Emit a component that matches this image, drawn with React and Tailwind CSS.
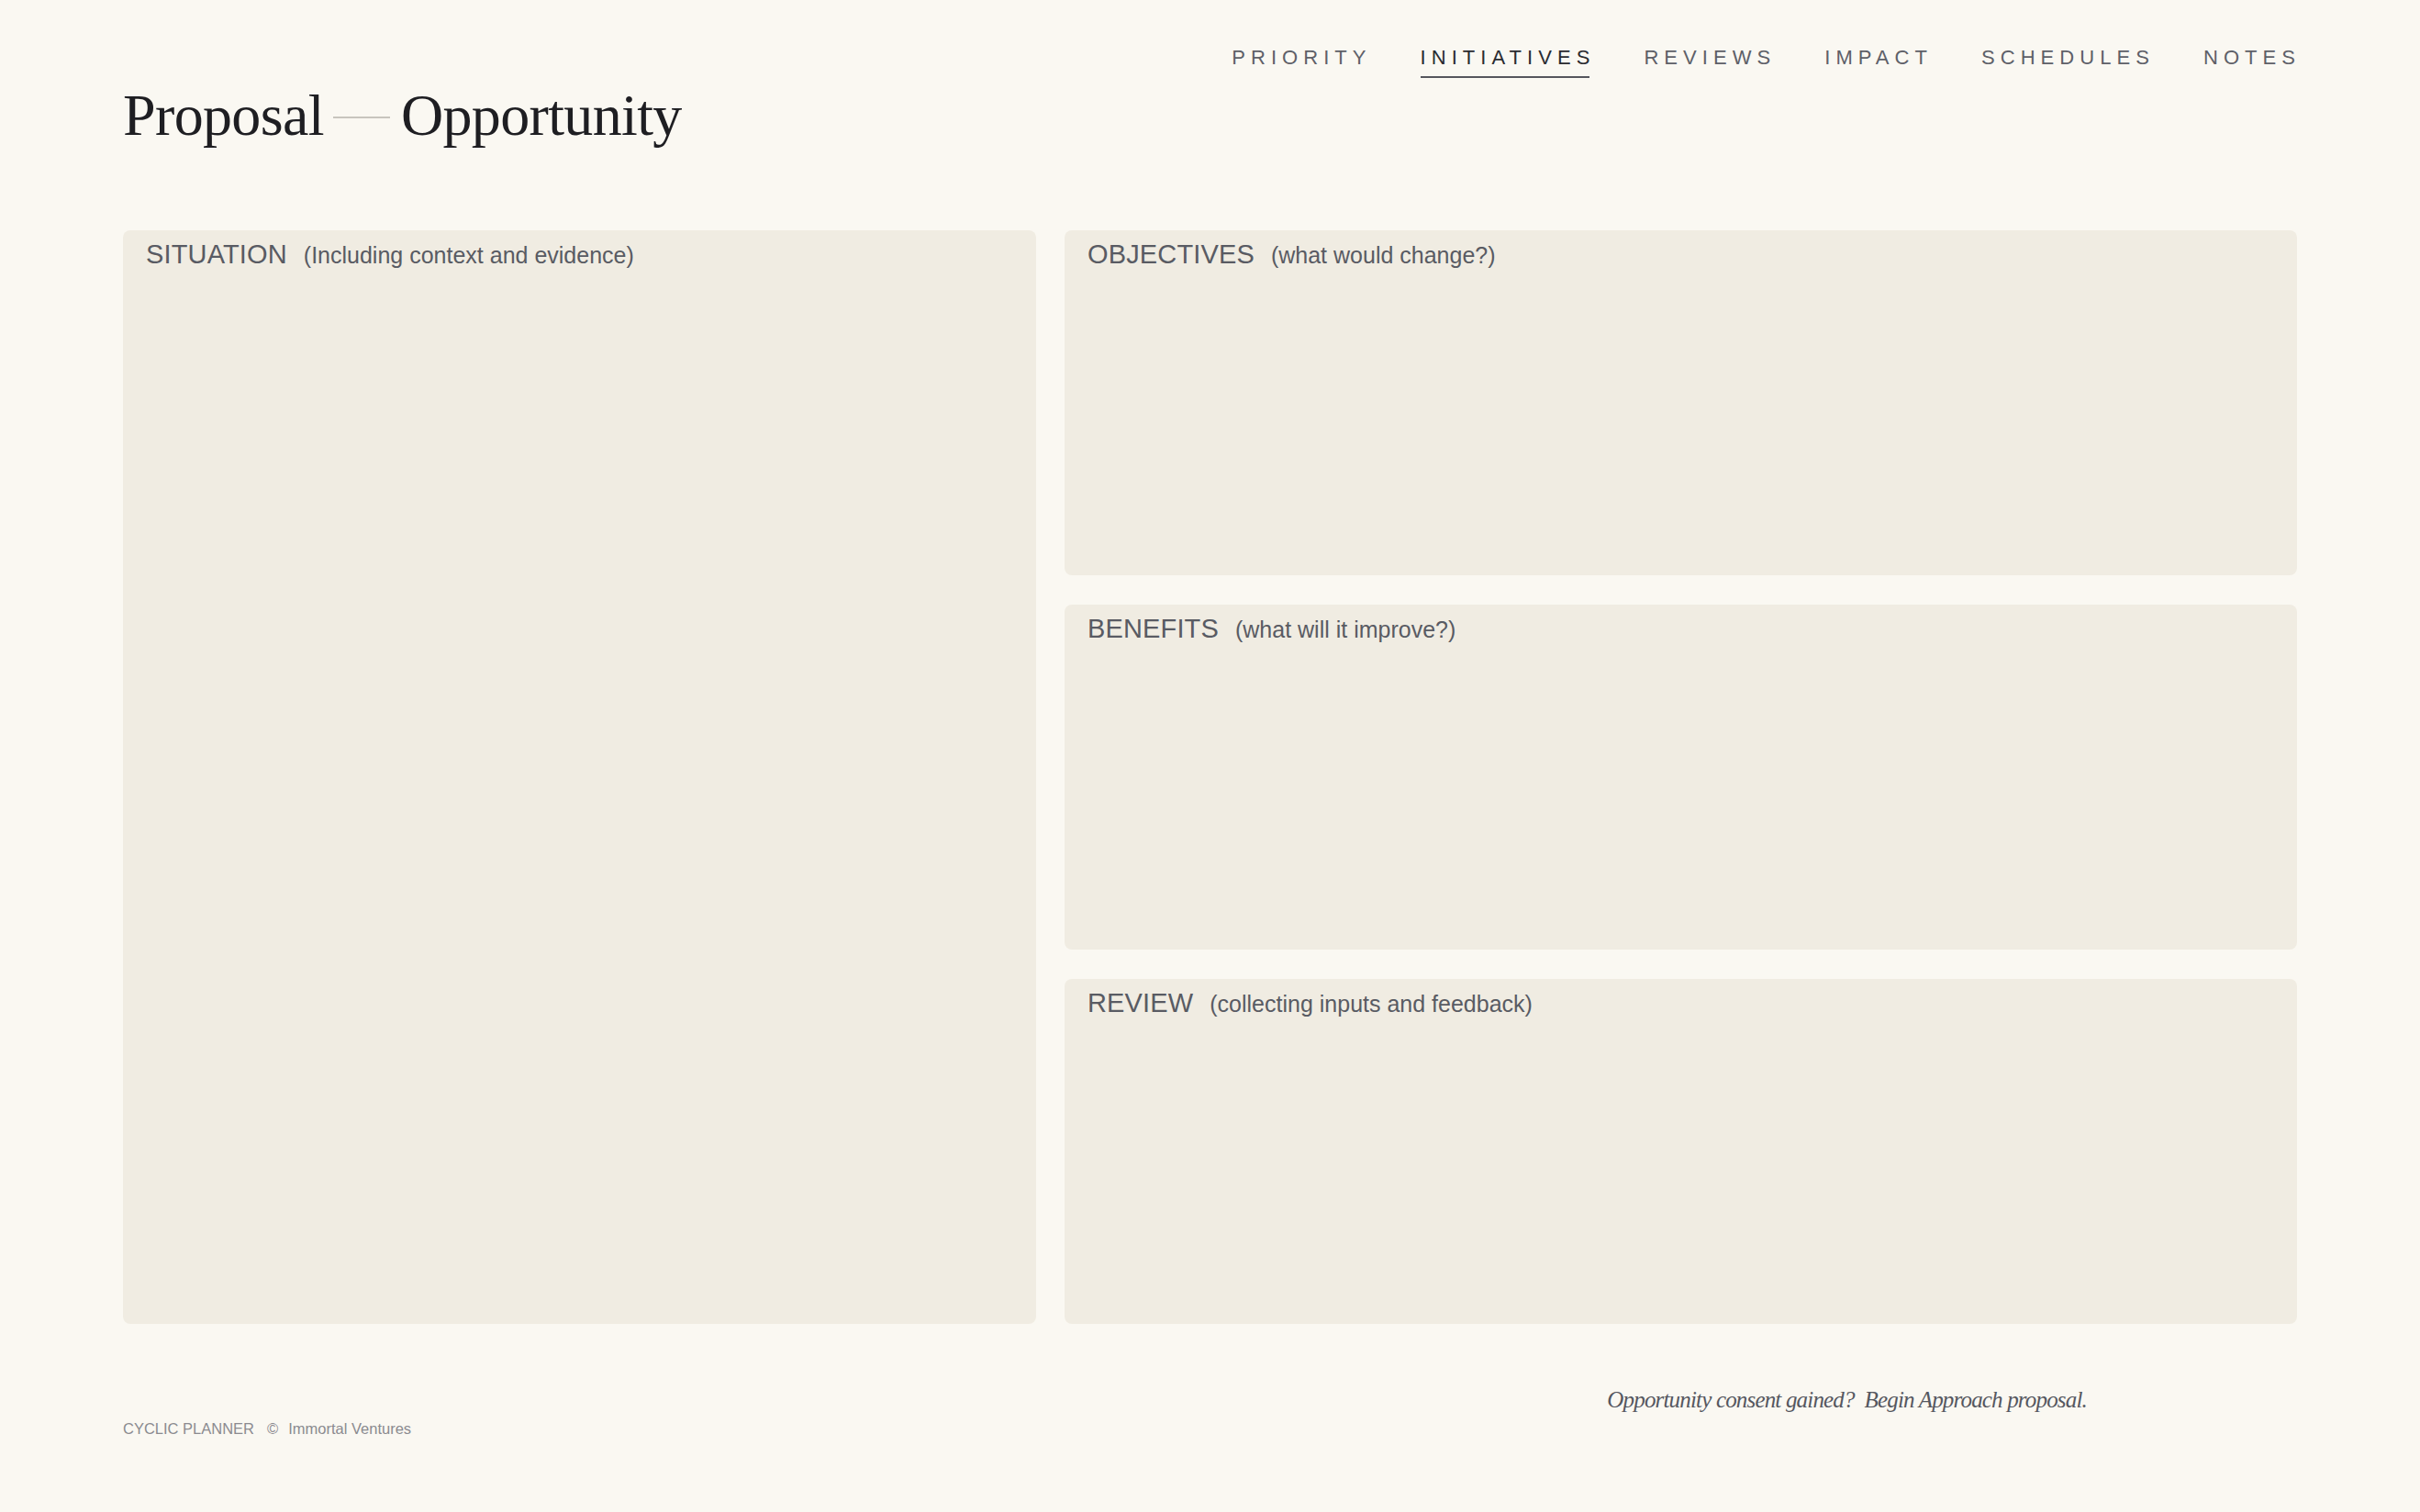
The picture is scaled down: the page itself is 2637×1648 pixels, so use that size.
import React from "react";

const NAV = ["PRIORITY", "INITIATIVES", "REVIEWS", "IMPACT", "SCHEDULES", "NOTES"];

function Panel({ title, sub, className = "" }) {
  return (
    <section className={"rounded-lg bg-[#f0ece2] px-[25px] pt-[9px] " + className}>
      <div className="flex items-baseline gap-[18px] leading-[1.2] text-[#595b63]" style={{ fontFamily: '"Liberation Sans", Arial, sans-serif' }}>
        <span className="text-[29px] tracking-[0.005em]">{title}</span>
        <span className="text-[25px]">{sub}</span>
      </div>
    </section>
  );
}

export default function App() {
  return (
    <div className="min-h-screen w-full bg-[#faf8f2] px-[134px]">
      <header className="flex items-start justify-between">
        <h1
          className="flex items-center pt-[94px] text-[64px] leading-none tracking-[-0.01em] text-[#1e1e22]"
          style={{ fontFamily: '"Liberation Serif", "Times New Roman", serif' }}
        >
          <span>Proposal</span>
          <span className="ml-[10px] mr-[12px] mt-[4px] inline-block h-[2px] w-[62px] bg-[#c8c5be]" />
          <span>Opportunity</span>
        </h1>
        <nav
          className="mr-[-4px] flex items-start gap-[53px] pt-[50px] text-[22px] leading-[1.2] tracking-[0.275em]"
          style={{ fontFamily: '"Liberation Sans", Arial, sans-serif' }}
        >
          {NAV.map((n) => (
            <div key={n} className="flex flex-col">
              <span className={n === "INITIATIVES" ? "text-[#2a2b30]" : "text-[#5e6068]"}>{n}</span>
              {n === "INITIATIVES" && <div className="mt-[7px] h-[2px] w-[calc(100%-6px)] bg-[#55565d]" />}
            </div>
          ))}
        </nav>
      </header>

      <main className="mt-[93px] grid h-[1192px] grid-cols-[995px_1fr] gap-x-[31px]">
        <Panel title="SITUATION" sub="(Including context and evidence)" />
        <div className="flex flex-col gap-[32px]">
          <Panel className="flex-1" title="OBJECTIVES" sub="(what would change?)" />
          <Panel className="flex-1" title="BENEFITS" sub="(what will it improve?)" />
          <Panel className="flex-1" title="REVIEW" sub="(collecting inputs and feedback)" />
        </div>
      </main>

      <footer className="flex items-start justify-between pb-[60px]">
        <div
          className="pt-[105px] text-[16.5px] leading-[1.2] text-[#8b8b90]"
          style={{ fontFamily: '"Liberation Sans", Arial, sans-serif' }}
        >
          <span>CYCLIC PLANNER</span>
          <span className="ml-[14px]">©</span>
          <span className="ml-[11px]">Immortal Ventures</span>
        </div>
        <div
          className="mr-[229px] pt-[68px] text-[25px] italic leading-[1.2] tracking-[-0.033em] text-[#55575f]"
          style={{ fontFamily: '"Liberation Serif", "Times New Roman", serif' }}
        >
          Opportunity consent gained?&nbsp; Begin Approach proposal.
        </div>
      </footer>
    </div>
  );
}
